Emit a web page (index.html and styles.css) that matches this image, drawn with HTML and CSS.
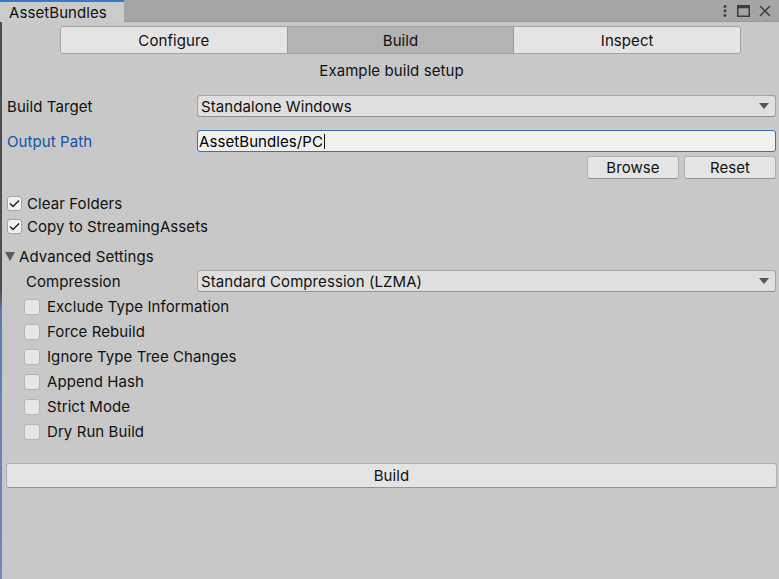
FILE: index.html
```html
<!DOCTYPE html>
<html>
<head>
<meta charset="utf-8">
<link rel="stylesheet" href="styles.css">
</head>
<body>
<div class="titlebar">
  <div class="tab">AssetBundles</div>
  <div class="win-icons">
    <svg class="icon" width="6" height="14" viewBox="0 0 6 14"><circle cx="3" cy="2.5" r="1.4"/><circle cx="3" cy="7" r="1.4"/><circle cx="3" cy="11.5" r="1.4"/></svg>
    <svg class="icon" width="13" height="12" viewBox="0 0 13 12"><rect x="0.75" y="0.75" width="11.5" height="10.5" fill="none" stroke="#3c3c3c" stroke-width="1.5"/><rect x="0.75" y="0.75" width="11.5" height="2.5" fill="#3c3c3c"/></svg>
    <svg class="icon" width="12" height="12" viewBox="0 0 12 12"><path d="M1 1 L11 11 M11 1 L1 11" stroke="#3c3c3c" stroke-width="1.5" fill="none"/></svg>
  </div>
</div>
<div class="content">
  <div class="toolbar">
    <div class="tbtn">Configure</div>
    <div class="tbtn active">Build</div>
    <div class="tbtn">Inspect</div>
  </div>
  <div class="subtitle">Example build setup</div>

  <div class="field first">
    <div class="label">Build Target</div>
    <div class="dropdown"><span>Standalone Windows</span><i class="arrow"></i></div>
  </div>
  <div class="field second">
    <div class="label blue">Output Path</div>
    <div class="textfield">AssetBundles/PC<span class="caret"></span></div>
  </div>
  <div class="btnrow">
    <div class="btn">Browse</div>
    <div class="btn">Reset</div>
  </div>

  <div class="checks">
    <div class="check"><span class="box on"><svg width="11" height="9" viewBox="0 0 11 9"><path d="M1 4.5 L4 7.5 L10 1.5" fill="none" stroke="#1e1e1e" stroke-width="1.4"/></svg></span>Clear Folders</div>
    <div class="check"><span class="box on"><svg width="11" height="9" viewBox="0 0 11 9"><path d="M1 4.5 L4 7.5 L10 1.5" fill="none" stroke="#1e1e1e" stroke-width="1.4"/></svg></span>Copy to StreamingAssets</div>
  </div>

  <div class="foldout"><i class="tri"></i>Advanced Settings</div>
  <div class="field third">
    <div class="label indent">Compression</div>
    <div class="dropdown"><span>Standard Compression (LZMA)</span><i class="arrow"></i></div>
  </div>
  <div class="subchecks">
    <div class="scheck"><span class="box"></span>Exclude Type Information</div>
    <div class="scheck"><span class="box"></span>Force Rebuild</div>
    <div class="scheck"><span class="box"></span>Ignore Type Tree Changes</div>
    <div class="scheck"><span class="box"></span>Append Hash</div>
    <div class="scheck"><span class="box"></span>Strict Mode</div>
    <div class="scheck"><span class="box"></span>Dry Run Build</div>
  </div>

  <div class="buildbtn">Build</div>
</div>
</body>
</html>
```
FILE: styles.css
```css
html, body {
  margin: 0;
  padding: 0;
  height: 100%;
}
body {
  background: #c8c8c8;
  font-family: Inter, "Noto Sans", sans-serif;
  font-size: 15px;
  letter-spacing: 0.08px;
  color: #111;
  overflow: hidden;
}
.titlebar {
  height: 21px;
  background: #a5a5a5;
  border-bottom: 1px solid #999;
  display: flex;
  align-items: stretch;
  justify-content: space-between;
}
.tab {
  width: 115px;
  padding-left: 9px;
  background: #cbcbcb;
  border-top: 2px solid #3a79c8;
  margin-bottom: -1px;
  display: flex;
  align-items: center;
  line-height: 19px;
  color: #111;
}
.win-icons {
  display: flex;
  align-items: center;
  gap: 9px;
  padding-right: 8px;
}
.icon { fill: #3c3c3c; display: block; }

.content {
  height: calc(100% - 22px);
  border-left: 2px solid #4a4a4a;
  border-image: linear-gradient(#4d4d4d 0, #4d4d4d 48%, #5d7dab 52%, #6c8ab5 100%) 1;
  display: flex;
  flex-direction: column;
  box-sizing: border-box;
}
.toolbar {
  margin: 4px 38px 0 58px;
  height: 28px;
  display: flex;
  border: 1px solid #a3a3a3;
  border-radius: 3px;
  background: #e4e4e4;
  box-sizing: border-box;
  overflow: hidden;
}
.tbtn {
  flex: 1;
  display: flex;
  align-items: center;
  justify-content: center;
  color: #111;
}
.tbtn.active {
  background: #b3b3b3;
  border-left: 1px solid #9a9a9a;
  border-right: 1px solid #9a9a9a;
}
.subtitle {
  margin-top: 7px;
  height: 20px;
  line-height: 20px;
  text-align: center;
  padding-left: 2px;
}
.field {
  display: flex;
  align-items: center;
  height: 22px;
  padding-left: 5px;
  margin-right: 3px;
}
.field.first { margin-top: 14px; }
.field.second { margin-top: 13px; }
.field.third { margin-top: 4px; }
.label {
  width: 190px;
  flex: none;
}
.label.indent { padding-left: 19px; width: 171px; }
.label.blue { color: #1254a8; }
.dropdown {
  flex: 1;
  height: 22px;
  box-sizing: border-box;
  background: #dfdfdf;
  border: 1px solid #a3a3a3;
  border-bottom-color: #8f8f8f;
  border-radius: 3px;
  display: flex;
  align-items: center;
  justify-content: space-between;
  padding: 0 6px 0 3px;
}
.arrow {
  width: 0;
  height: 0;
  border-left: 5px solid transparent;
  border-right: 5px solid transparent;
  border-top: 6px solid #555;
}
.textfield {
  flex: 1;
  height: 22px;
  box-sizing: border-box;
  background: #f0f0f0;
  border: 1px solid #3f6fae;
  border-radius: 3px;
  display: flex;
  align-items: center;
  padding-left: 1px;
  color: #000;
}
.caret {
  width: 1px;
  height: 15px;
  background: #111;
  margin-left: 1px;
}
.btnrow {
  margin-top: 4px;
  height: 23px;
  display: flex;
  justify-content: flex-end;
  gap: 5px;
  margin-right: 3px;
}
.btn {
  width: 92px;
  box-sizing: border-box;
  background: #e4e4e4;
  border: 1px solid #b0b0b0;
  border-bottom-color: #959595;
  border-radius: 3px;
  display: flex;
  align-items: center;
  justify-content: center;
}
.checks { margin-top: 13px; }
.check {
  height: 23px;
  display: flex;
  align-items: center;
  gap: 5px;
  padding-left: 5px;
}
.box {
  width: 15px;
  height: 15px;
  box-sizing: border-box;
  border: 1px solid #b4b4b4;
  border-radius: 3px;
  background: #e6e6e6;
  display: flex;
  align-items: center;
  justify-content: center;
  flex: none;
}
.box.on {
  background: #f0f0f0;
  border-color: #a5a5a5;
}
.foldout {
  margin-top: 8px;
  height: 20px;
  display: flex;
  align-items: center;
  gap: 4px;
  padding-left: 3px;
}
.tri {
  width: 0;
  height: 0;
  border-left: 5px solid transparent;
  border-right: 5px solid transparent;
  border-top: 9px solid #5c5c5c;
}
.subchecks { margin-top: 2px; }
.scheck {
  height: 25px;
  display: flex;
  align-items: center;
  gap: 7px;
  padding-left: 22px;
}
.scheck .box { width: 16px; height: 16px; }
.buildbtn {
  margin: 19px 2px 0 4px;
  height: 25px;
  box-sizing: border-box;
  background: #e4e4e4;
  border: 1px solid #b0b0b0;
  border-bottom-color: #939393;
  border-radius: 3px;
  display: flex;
  align-items: center;
  justify-content: center;
}
```
